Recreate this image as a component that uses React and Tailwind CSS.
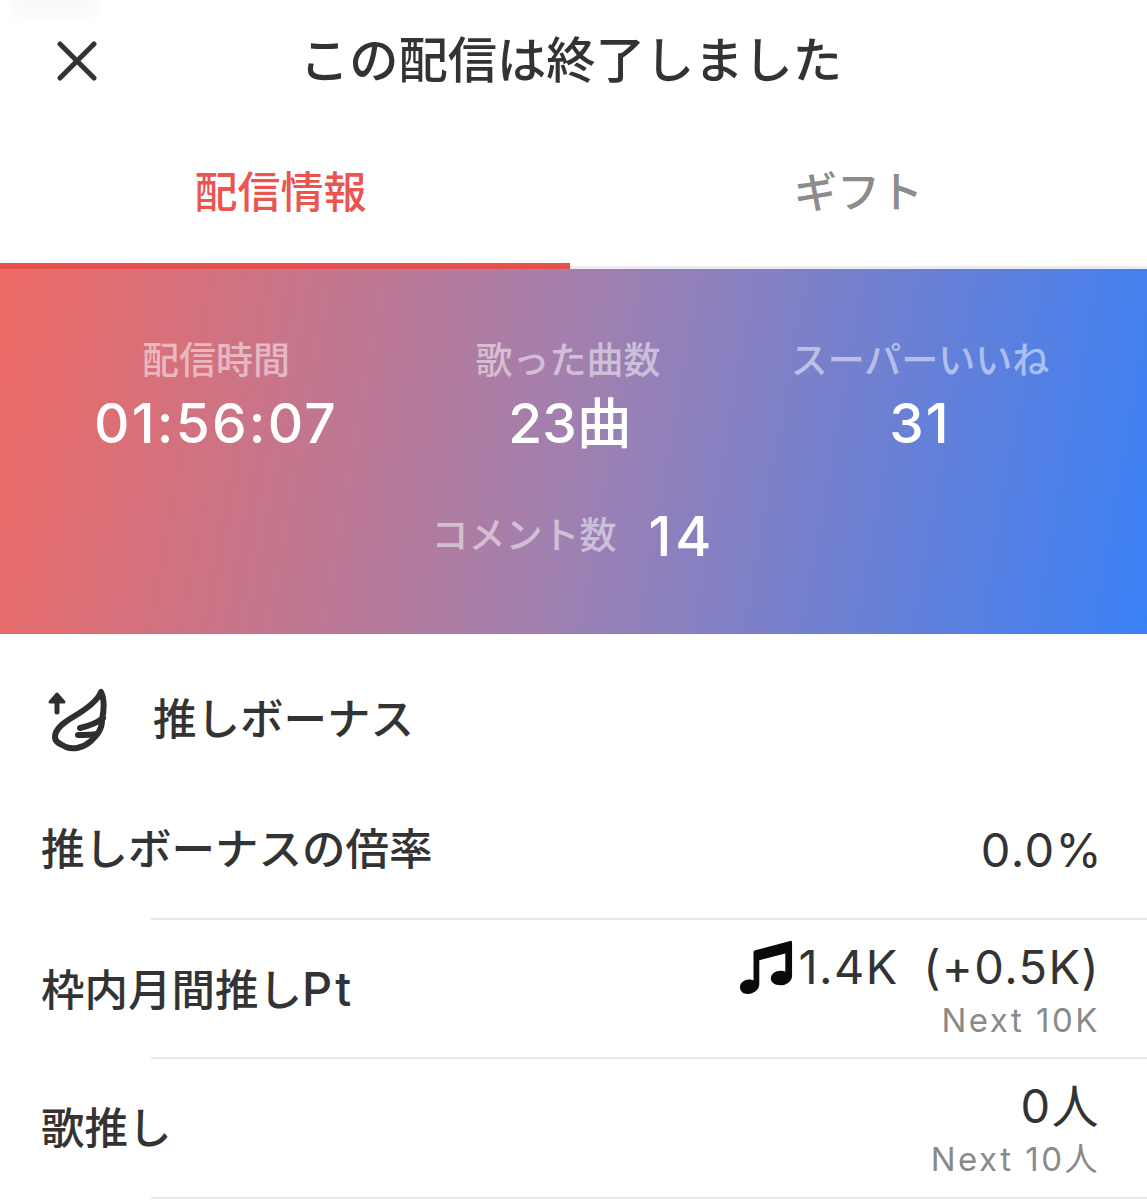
import React from 'react';

const jp = "font-['Inter','Noto_Sans_CJK_JP',sans-serif]";

const Wing = () => (
  <svg viewBox="0 0 60 64" className="w-[60px] h-[64px]" fill="none" stroke="#2f2f2f" strokeLinecap="round" strokeLinejoin="round">
    <path d="M10 24V8" strokeWidth="5" />
    <path d="M3 14L10 6L17 14Z" fill="#2f2f2f" strokeWidth="3" />
    <path d="M54 4C50 14 38 22 26 29C16 35 8 41 8 49C8 55 14 56 19 59C26 62 36 60 44 53C50 47 55 42 55 32C57 22 58 12 54 4Z" strokeWidth="6" />
    <path d="M56 30C50 35 42 38 33 40M50 46C44 47 38 47 31 47" strokeWidth="6" />
  </svg>
);

const Note = () => (
  <svg viewBox="0 0 56 58" className="w-[54px] h-[56px] -my-[3px] mr-[5px]" fill="#0a0a0a">
    <path d="M15 12L52 2C53.5 1.6 54 2.5 54 4V38C54 44 48 48 42 48C36 48 32 45 32 41C32 36 37 33 42 33C44 33 46 33.5 47 34V15L20 22V47C20 53 14 57 8 57C3 57 0 54 0 50C0 45 5 42 9 42C11 42 13 42.5 14 43V16C14 14 14 12.5 15 12Z" />
  </svg>
);

const Stat = ({ label, value }) => (
  <div className="flex flex-col items-center">
    <div className="text-[37px] leading-[44px] font-medium text-white/50">{label}</div>
    <div className="text-[55px] leading-[60px] font-medium text-white tracking-[2.2px] mt-[10px]">{value}</div>
  </div>
);

const Row = ({ label, value, sub, icon }) => (
  <div className="relative flex items-center justify-between pl-[41px] pr-[47px] h-[139.5px]">
    <div className="text-[43.5px] font-medium text-[#333333]">{label}</div>
    <div className={`flex flex-col items-end ${sub ? 'pt-[3px]' : ''}`}>
      <div className="flex items-center text-[47px] leading-[50px] tracking-[1.4px] [word-spacing:10px] text-[#333333]">
        {icon}
        {value}
      </div>
      {sub && <div className="mt-[8px] text-[33px] leading-[40px] text-[#8a8a8a] tracking-[2.5px]">{sub}</div>}
    </div>
    <div className="absolute bottom-0 left-[151px] right-0 h-[2px] bg-[#e8e8e8]" />
  </div>
);

const App = () => {
  return (
    <div className={`relative w-[1147px] h-[1200px] overflow-hidden bg-white ${jp}`}>
      <div className="absolute left-[10px] -top-[10px] w-[90px] h-[30px] rounded-full bg-[#fafafa] blur-[4px]" />

      {/* ヘッダー */}
      <div className="relative flex items-center justify-center h-[122px] pr-[5px]">
        <svg viewBox="0 0 40 40" className="absolute left-[57px] top-[41px] w-[40px] h-[40px]" stroke="#333333" strokeWidth="5" strokeLinecap="round">
          <path d="M3 3L37 37M37 3L3 37" />
        </svg>
        <div className="text-[49.3px] font-medium text-[#333333]">この配信は終了しました</div>
      </div>

      {/* タブ */}
      <div className="flex h-[147px]">
        <div className="w-[570px] h-full flex items-center justify-center border-b-[6px] border-[#e5504f] pr-[9px] text-[43px] font-medium text-[#ea5550]">
          配信情報
        </div>
        <div className="flex-1 h-full flex items-center justify-center border-b-[3px] border-[#ebebf0] pb-[3px] text-[43px] font-medium text-[#8c8c8c]">
          ギフト
        </div>
      </div>

      {/* 配信の統計 */}
      <div className="h-[365px] bg-[linear-gradient(100deg,#ee6a64,#a080b0_50%,#3a80f6)] pt-[70px]">
        <div className="grid grid-cols-3 pl-[40px] pr-[51px]">
          <Stat label="配信時間" value="01:56:07" />
          <Stat label="歌った曲数" value={<span className="tracking-[0px] ml-[4px]">23曲</span>} />
          <Stat label="スーパーいいね" value="31" />
        </div>
        <div className="flex items-center justify-center mt-[53px]">
          <span className="text-[37px] font-medium text-white/50">コメント数</span>
          <span className="ml-[32px] text-[55px] leading-[60px] font-medium text-white tracking-[4px]">14</span>
        </div>
      </div>

      {/* 推しボーナス */}
      <div className="flex items-center h-[146px] pt-[26px] pl-[47px]">
        <Wing />
        <div className="ml-[46px] text-[43.5px] font-medium text-[#333333]">推しボーナス</div>
      </div>

      <Row label="推しボーナスの倍率" value={<span className="-mr-[3px]">0.0%</span>} />
      <Row
        label={<>枠内月間推し<span className="text-[47px] tracking-[3px]">Pt</span></>}
        value="1.4K (+0.5K)"
        sub="Next 10K"
        icon={<Note />}
      />
      <Row label="歌推し" value="0人" sub="Next 10人" />
    </div>
  );
};

export default App;
